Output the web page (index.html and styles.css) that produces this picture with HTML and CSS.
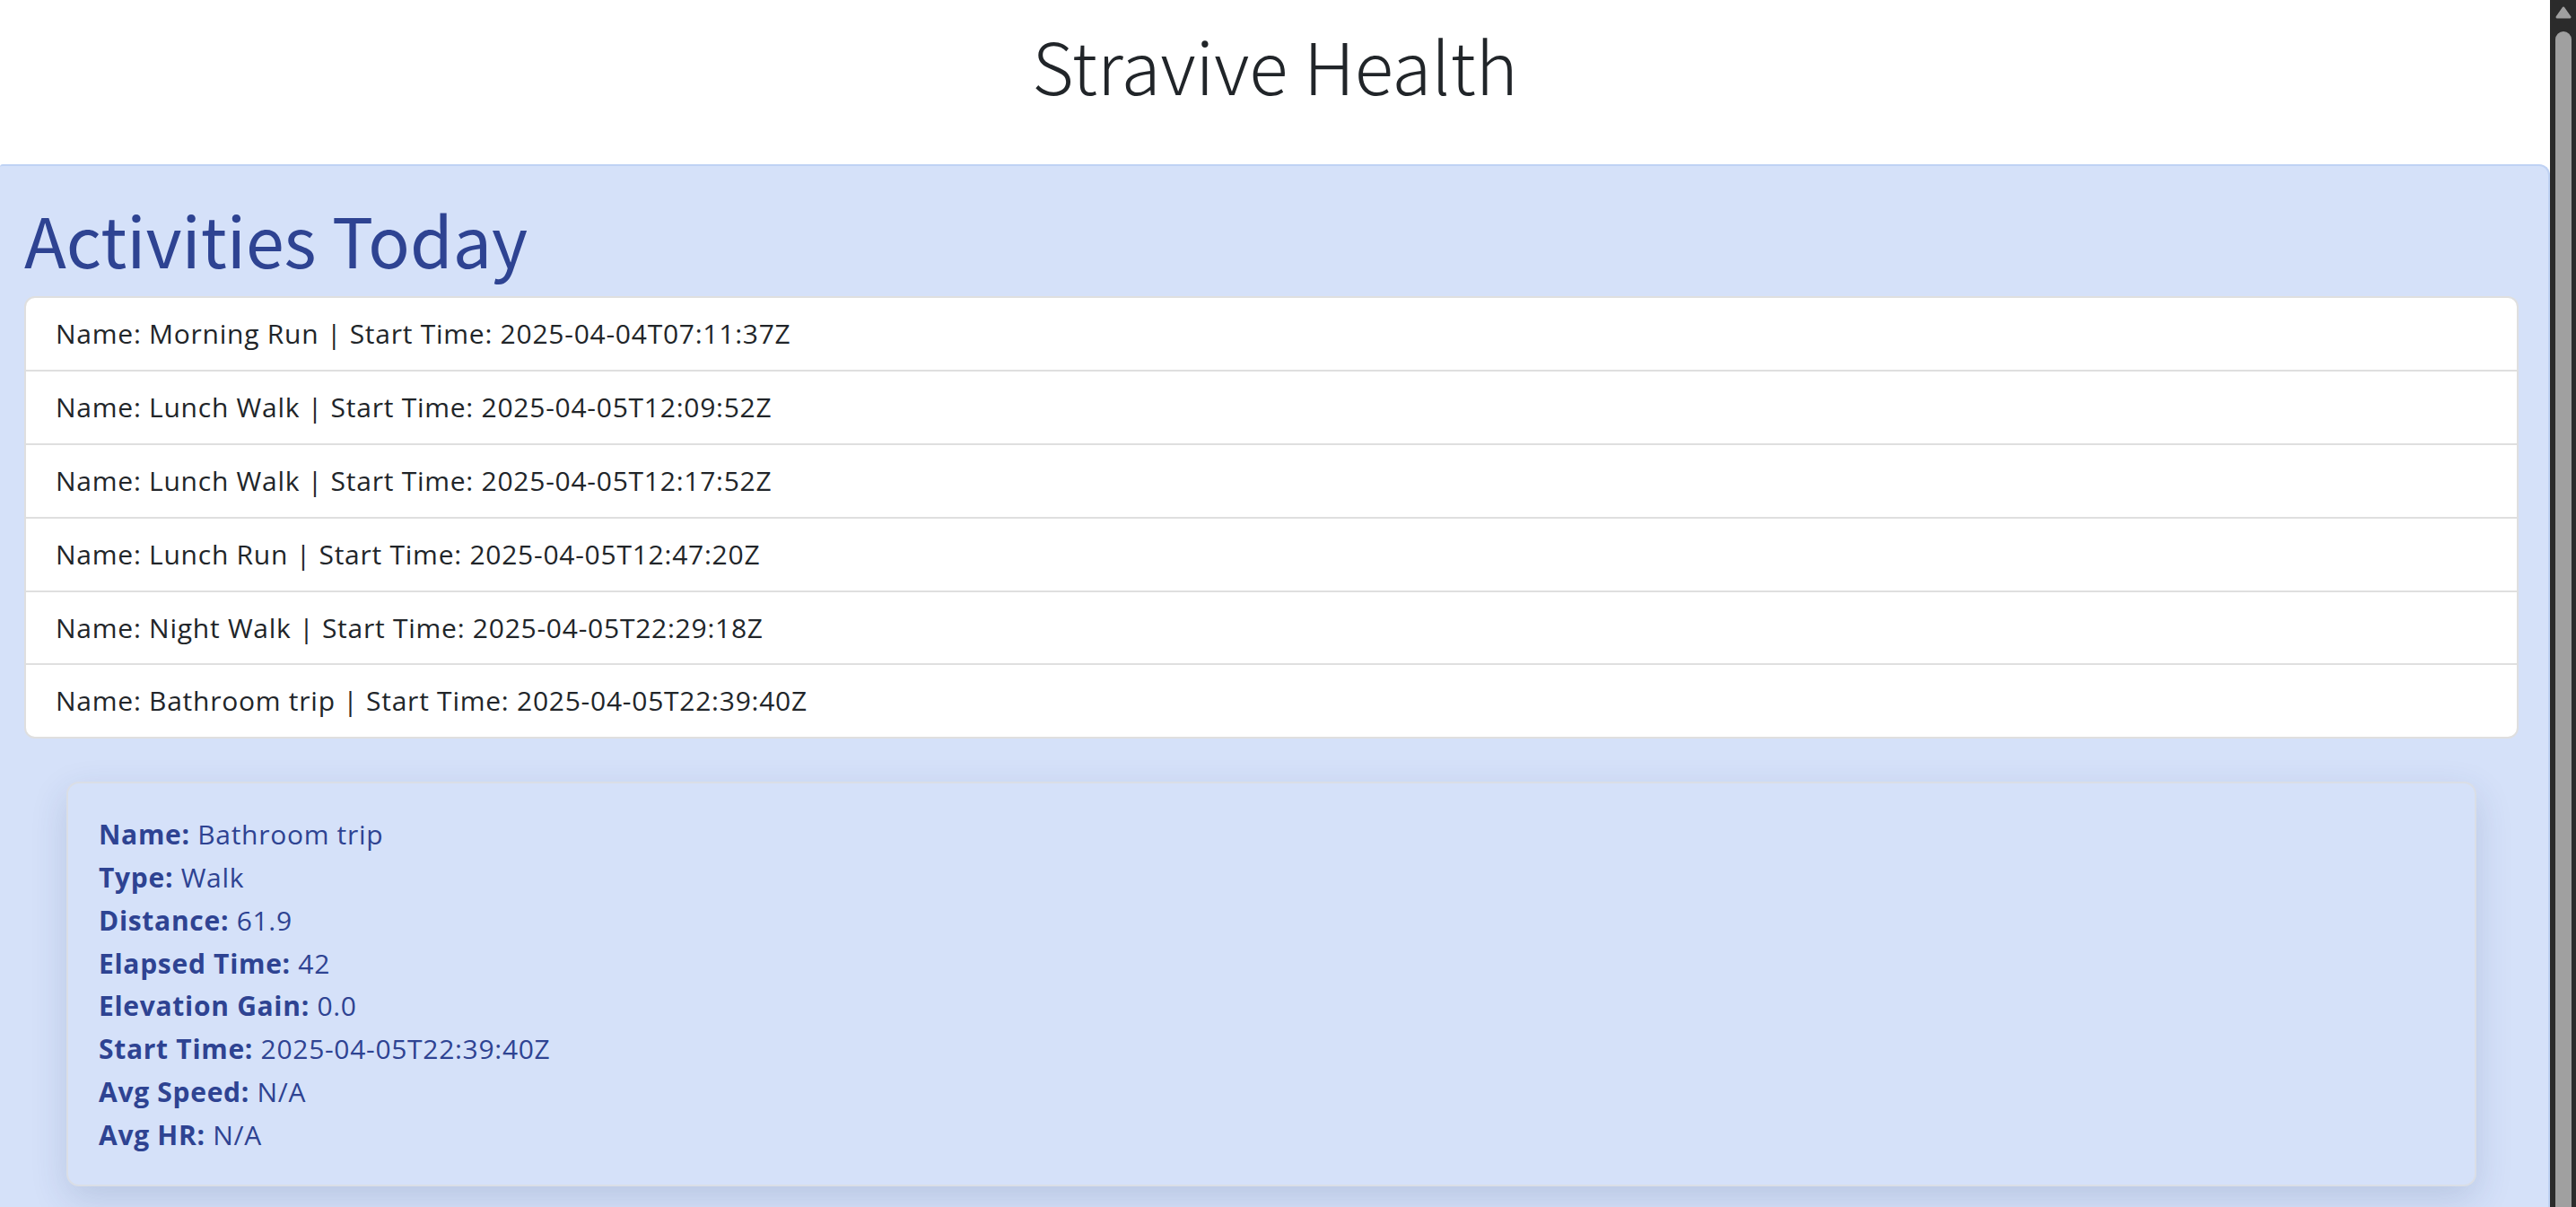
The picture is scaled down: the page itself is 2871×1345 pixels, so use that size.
FILE: index.html
```html
<!DOCTYPE html>
<html lang="en">
<head>
<meta charset="utf-8">
<title>Stravive Health</title>
<link rel="stylesheet" href="styles.css">
</head>
<body>
<header class="site-header">
  <h1 class="site-title">Stravive Health</h1>
</header>
<main class="panel">
  <h2 class="panel-title">Activities Today</h2>
  <ul class="activity-list">
    <li class="activity-item">Name: Morning Run | Start Time: 2025-04-04T07:11:37Z</li>
    <li class="activity-item">Name: Lunch Walk | Start Time: 2025-04-05T12:09:52Z</li>
    <li class="activity-item">Name: Lunch Walk | Start Time: 2025-04-05T12:17:52Z</li>
    <li class="activity-item">Name: Lunch Run | Start Time: 2025-04-05T12:47:20Z</li>
    <li class="activity-item">Name: Night Walk | Start Time: 2025-04-05T22:29:18Z</li>
    <li class="activity-item">Name: Bathroom trip | Start Time: 2025-04-05T22:39:40Z</li>
  </ul>
  <div class="detail-wrap">
    <section class="detail-card">
      <p class="detail-line"><strong>Name:</strong> Bathroom trip</p>
      <p class="detail-line"><strong>Type:</strong> Walk</p>
      <p class="detail-line"><strong>Distance:</strong> 61.9</p>
      <p class="detail-line"><strong>Elapsed Time:</strong> 42</p>
      <p class="detail-line"><strong>Elevation Gain:</strong> 0.0</p>
      <p class="detail-line"><strong>Start Time:</strong> 2025-04-05T22:39:40Z</p>
      <p class="detail-line"><strong>Avg Speed:</strong> N/A</p>
      <p class="detail-line"><strong>Avg HR:</strong> N/A</p>
    </section>
  </div>
</main>
<div class="scrollbar" aria-hidden="true">
  <svg class="scrollbar-arrow" width="18" height="14" viewBox="0 0 18 14">
    <polygon points="9,2 16,12 2,12" fill="#a0a0a0" stroke="#a0a0a0" stroke-width="3" stroke-linejoin="round"/>
  </svg>
  <div class="scrollbar-thumb"></div>
</div>
</body>
</html>
```

FILE: styles.css
```css
html {
  background: #ffffff;
}
body {
  margin: 0;
  padding-right: 29px;
  font-family: "Open Sans", "Noto Sans", sans-serif;
  color: #212529;
  background: #ffffff;
}
.site-header {
  height: 183px;
  display: flex;
  align-items: flex-start;
  justify-content: center;
}
.site-title {
  margin: 23px 0 0;
  font-family: "Noto Sans CJK KR", "Noto Sans", sans-serif;
  font-size: 80px;
  font-weight: 300;
  line-height: 1.2;
  color: #212529;
}
.panel {
  background: #d5e1f9;
  border-top: 2px solid #bfd2f4;
  border-right: 2px solid #bfd2f4;
  border-radius: 3px 12px 0 0;
  padding: 35px 33px 40px 27px;
}
.panel-title {
  margin: 0 0 18px;
  font-family: "Noto Sans CJK KR", "Noto Sans", sans-serif;
  font-size: 77px;
  font-weight: 400;
  line-height: 1.2;
  color: #2e4392;
}
.activity-list {
  list-style: none;
  margin: 0;
  padding: 0;
  background: #ffffff;
  border: 2px solid #dfdfdf;
  border-radius: 12px;
  overflow: hidden;
}
.activity-item {
  padding: 16px 33px;
  font-size: 30px;
  letter-spacing: 0.75px;
  line-height: 47.8px;
  border-top: 2px solid #dfdfdf;
}
.activity-item:first-child {
  border-top: none;
}
.detail-wrap {
  padding: 48px 47px 0;
}
.detail-card {
  background: #d5e1f9;
  border: 2px solid #dadee6;
  border-radius: 14px;
  box-shadow: 0 14px 40px rgba(40, 60, 110, 0.16);
  padding: 33px 34px 31px;
  color: #2e4392;
}
.detail-line {
  margin: 0;
  font-size: 30px;
  letter-spacing: 0.7px;
  line-height: 47.8px;
}
.detail-line strong {
  font-weight: 700;
}
.scrollbar {
  position: fixed;
  top: 0;
  right: 0;
  bottom: 0;
  width: 29px;
  background: #2b2b2b;
  display: flex;
  flex-direction: column;
  align-items: center;
}
.scrollbar-arrow {
  display: block;
  margin: 7px 0 0 1px;
}
.scrollbar-thumb {
  width: 18px;
  margin: 14px 0 0 1px;
  flex: 1;
  background: #a0a0a0;
  border-radius: 9px 9px 0 0;
}
```
